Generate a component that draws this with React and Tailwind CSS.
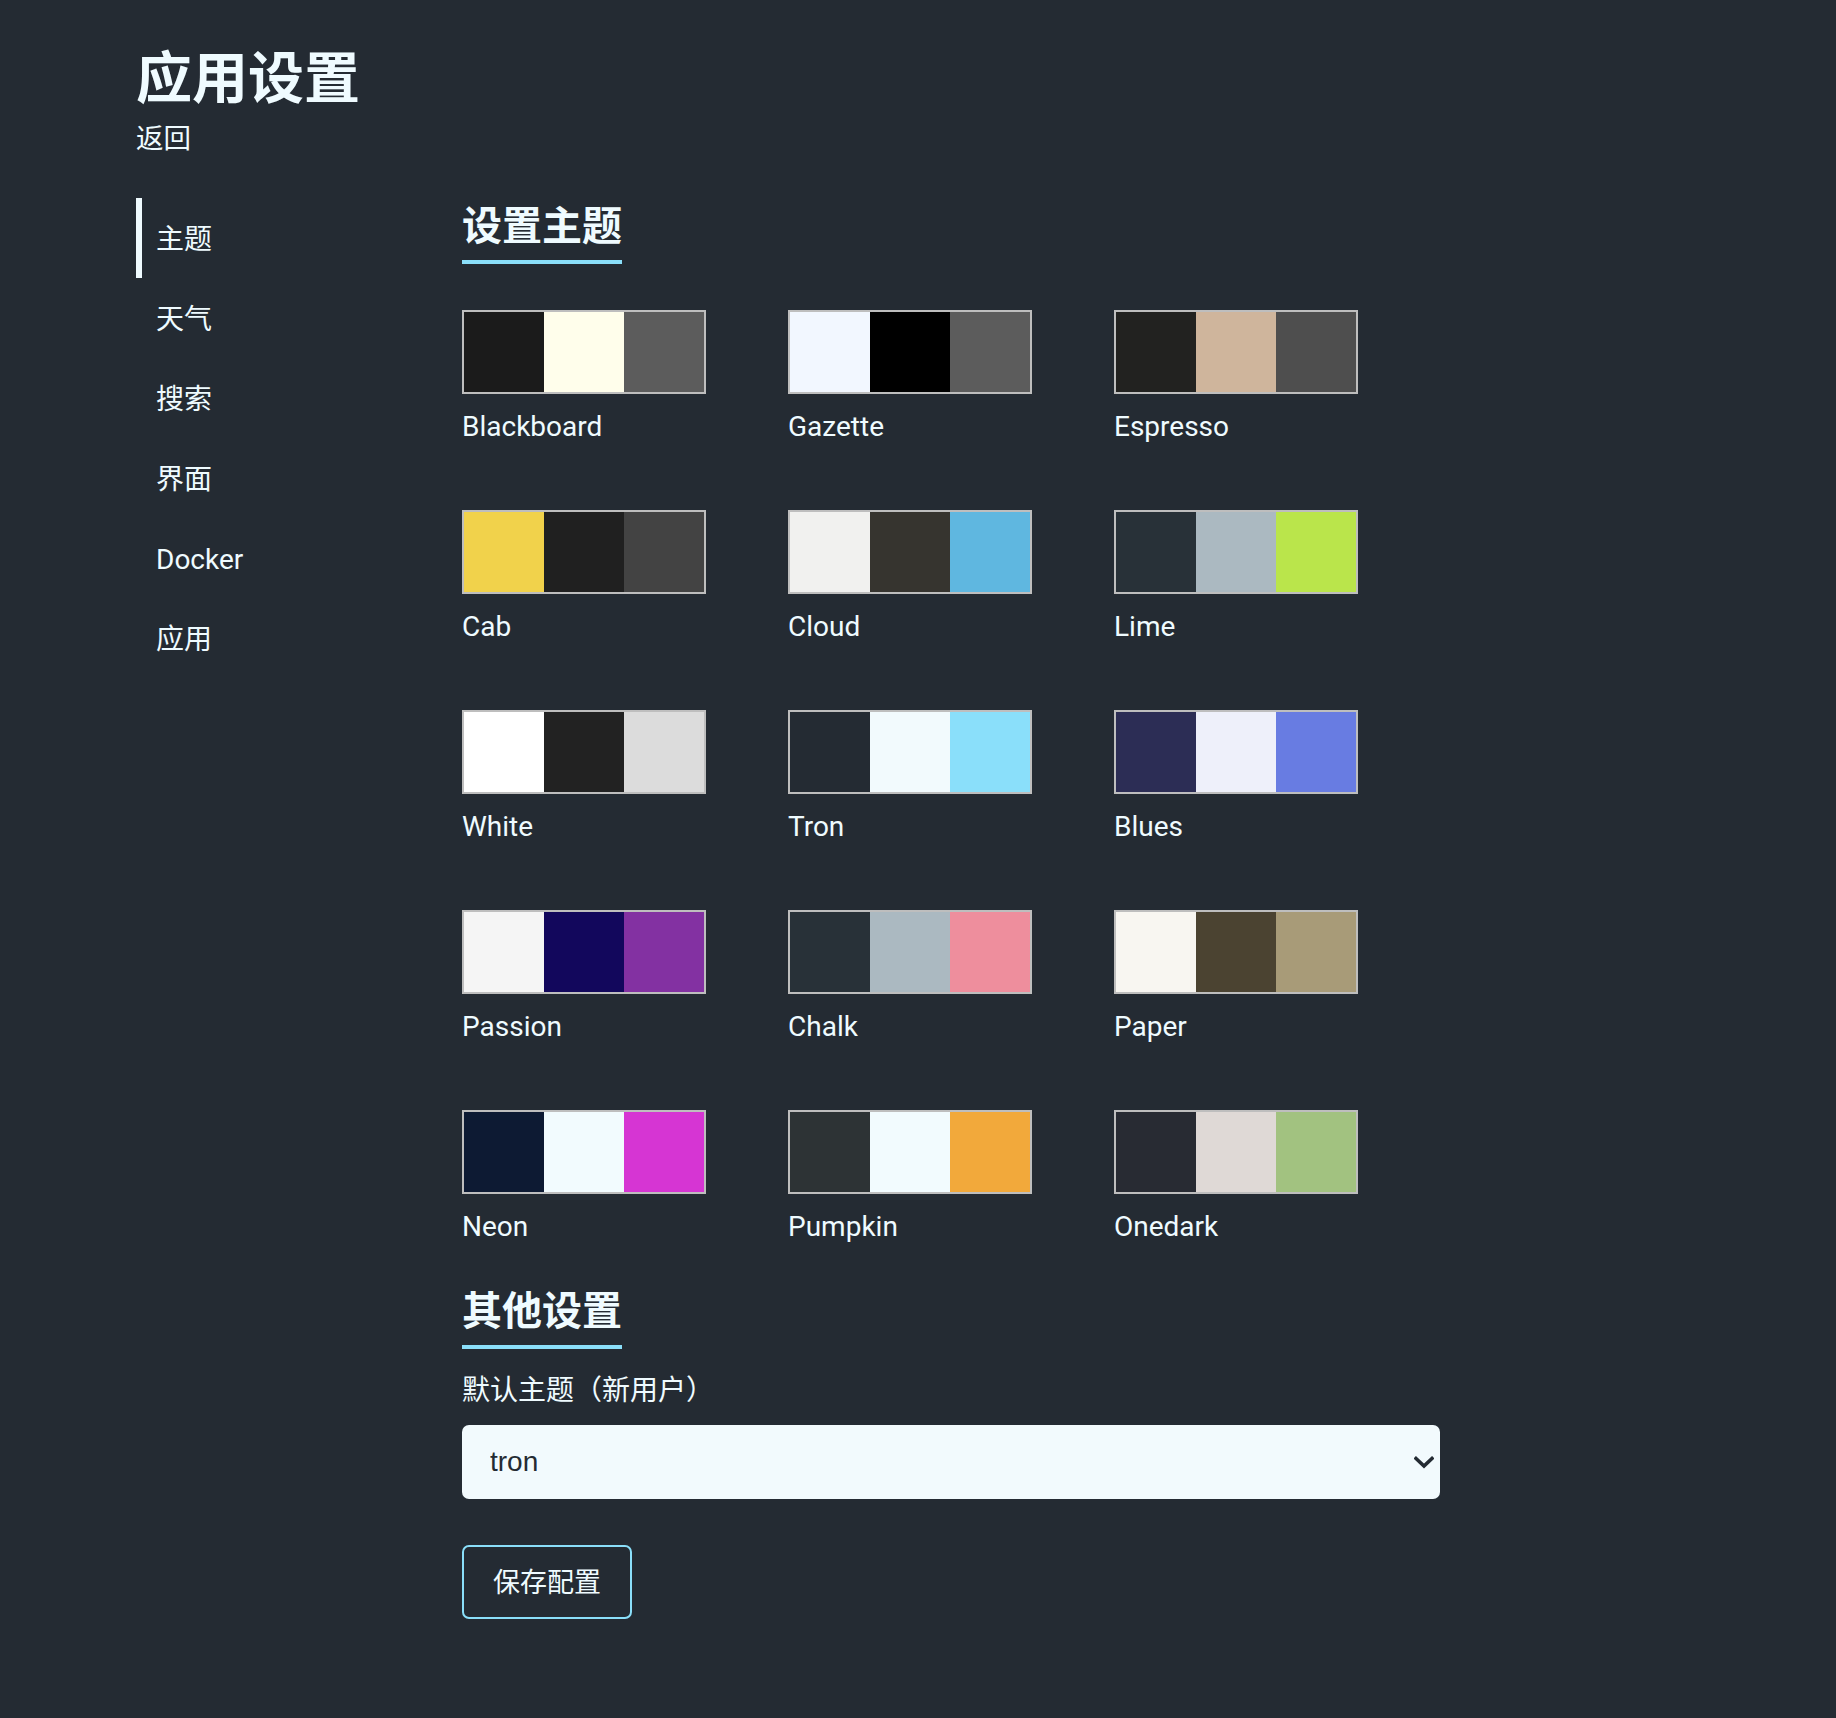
import React, { useState } from "react";

const THEMES = [
  ["Blackboard", ["#1b1b1b", "#fffeeb", "#5c5c5c"]],
  ["Gazette", ["#f2f7ff", "#000000", "#5c5c5c"]],
  ["Espresso", ["#222220", "#cfb59c", "#4e4e4e"]],
  ["Cab", ["#f1d24b", "#202020", "#434343"]],
  ["Cloud", ["#f1f1ef", "#36342f", "#5fb7e0"]],
  ["Lime", ["#283138", "#abb9c1", "#bae54b"]],
  ["White", ["#ffffff", "#222222", "#dcdcdc"]],
  ["Tron", ["#242b33", "#f2fafd", "#8adffa"]],
  ["Blues", ["#2c2d55", "#eef0fa", "#687ce2"]],
  ["Passion", ["#f5f5f5", "#12075c", "#8331a2"]],
  ["Chalk", ["#283138", "#abb9c1", "#ee8e9d"]],
  ["Paper", ["#f8f6f1", "#4b4331", "#a89b78"]],
  ["Neon", ["#0d1a33", "#f2fbfe", "#d635d3"]],
  ["Pumpkin", ["#2d3335", "#f2fbfe", "#f2a93b"]],
  ["Onedark", ["#282b33", "#dfd9d6", "#a2c280"]],
];

const NAV = ["主题", "天气", "搜索", "界面", "Docker", "应用"];

function Swatch({ name, colors }) {
  return (
    <div className="flex flex-col">
      <div className="flex w-[244px] h-[84px] border-2 border-[#bebebe]">
        {colors.map((c, i) => (
          <div key={i} className="h-full w-[80px]" style={{ backgroundColor: c }} />
        ))}
      </div>
      <div className="mt-[16px] leading-[33px] text-[28px]">{name}</div>
    </div>
  );
}

export default function App() {
  const [theme, setTheme] = useState("tron");
  return (
    <div className="min-h-[1718px] w-full bg-[#242b33] text-[#effbff] font-['Roboto','Noto_Sans_CJK_SC',sans-serif] pl-[136px] pt-[51px]">
      <div className="text-[56px] leading-[56px] font-bold">应用设置</div>
      <div className="mt-[18px] text-[27.5px] leading-[27px]">返回</div>

      <div className="mt-[46px] flex">
        <nav className="w-[326px] flex flex-col">
          {NAV.map((n, i) => (
            <div
              key={n}
              className={
                "h-[80px] flex items-center pl-[14px] pt-[3px] border-l-[6px] text-[28px] leading-[28px] " +
                (i === 0 ? "border-[#effbff]" : "border-transparent")
              }
            >
              {n}
            </div>
          ))}
        </nav>

        <main className="w-[978px] pt-[9px] flex flex-col items-start">
          <div className="inline-block text-[40px] leading-[40px] font-bold pb-[13px] border-b-4 border-[#8adffa]">
            设置主题
          </div>

          <div className="mt-[46px] grid grid-cols-[244px_244px_244px] gap-x-[82px] gap-y-[67px]">
            {THEMES.map(([n, c]) => (
              <Swatch key={n} name={n} colors={c} />
            ))}
          </div>

          <div className="mt-[49px] inline-block text-[40px] leading-[40px] font-bold pb-[13px] border-b-4 border-[#8adffa]">
            其他设置
          </div>

          <div className="mt-[25px] text-[28px] leading-[33px]">默认主题（新用户）</div>

          <div className="mt-[18px] relative w-[978px] h-[74px]">
            <select
              value={theme}
              onChange={(e) => setTheme(e.target.value)}
              className="appearance-none w-full h-full rounded-[7px] bg-[#f2fafd] text-[#242b33] pl-[28px] pr-[50px] text-[28px] font-['Liberation_Sans',Arial,sans-serif] outline-none"
            >
              {THEMES.map(([n]) => (
                <option key={n} value={n.toLowerCase()}>
                  {n.toLowerCase()}
                </option>
              ))}
            </select>
            <svg
              className="absolute right-[6px] top-[31px] pointer-events-none"
              width="20"
              height="13"
              viewBox="0 0 20 13"
            >
              <path d="M2 2.5 L10 10 L18 2.5" fill="none" stroke="#242b33" strokeWidth="3.6" strokeLinecap="square" />
            </svg>
          </div>

          <button className="mt-[46px] w-[170px] h-[74px] rounded-[7px] border-2 border-[#8adffa] text-[27px] leading-[28px] pt-[2px] text-[#effbff] bg-transparent">
            保存配置
          </button>
        </main>
      </div>
    </div>
  );
}
